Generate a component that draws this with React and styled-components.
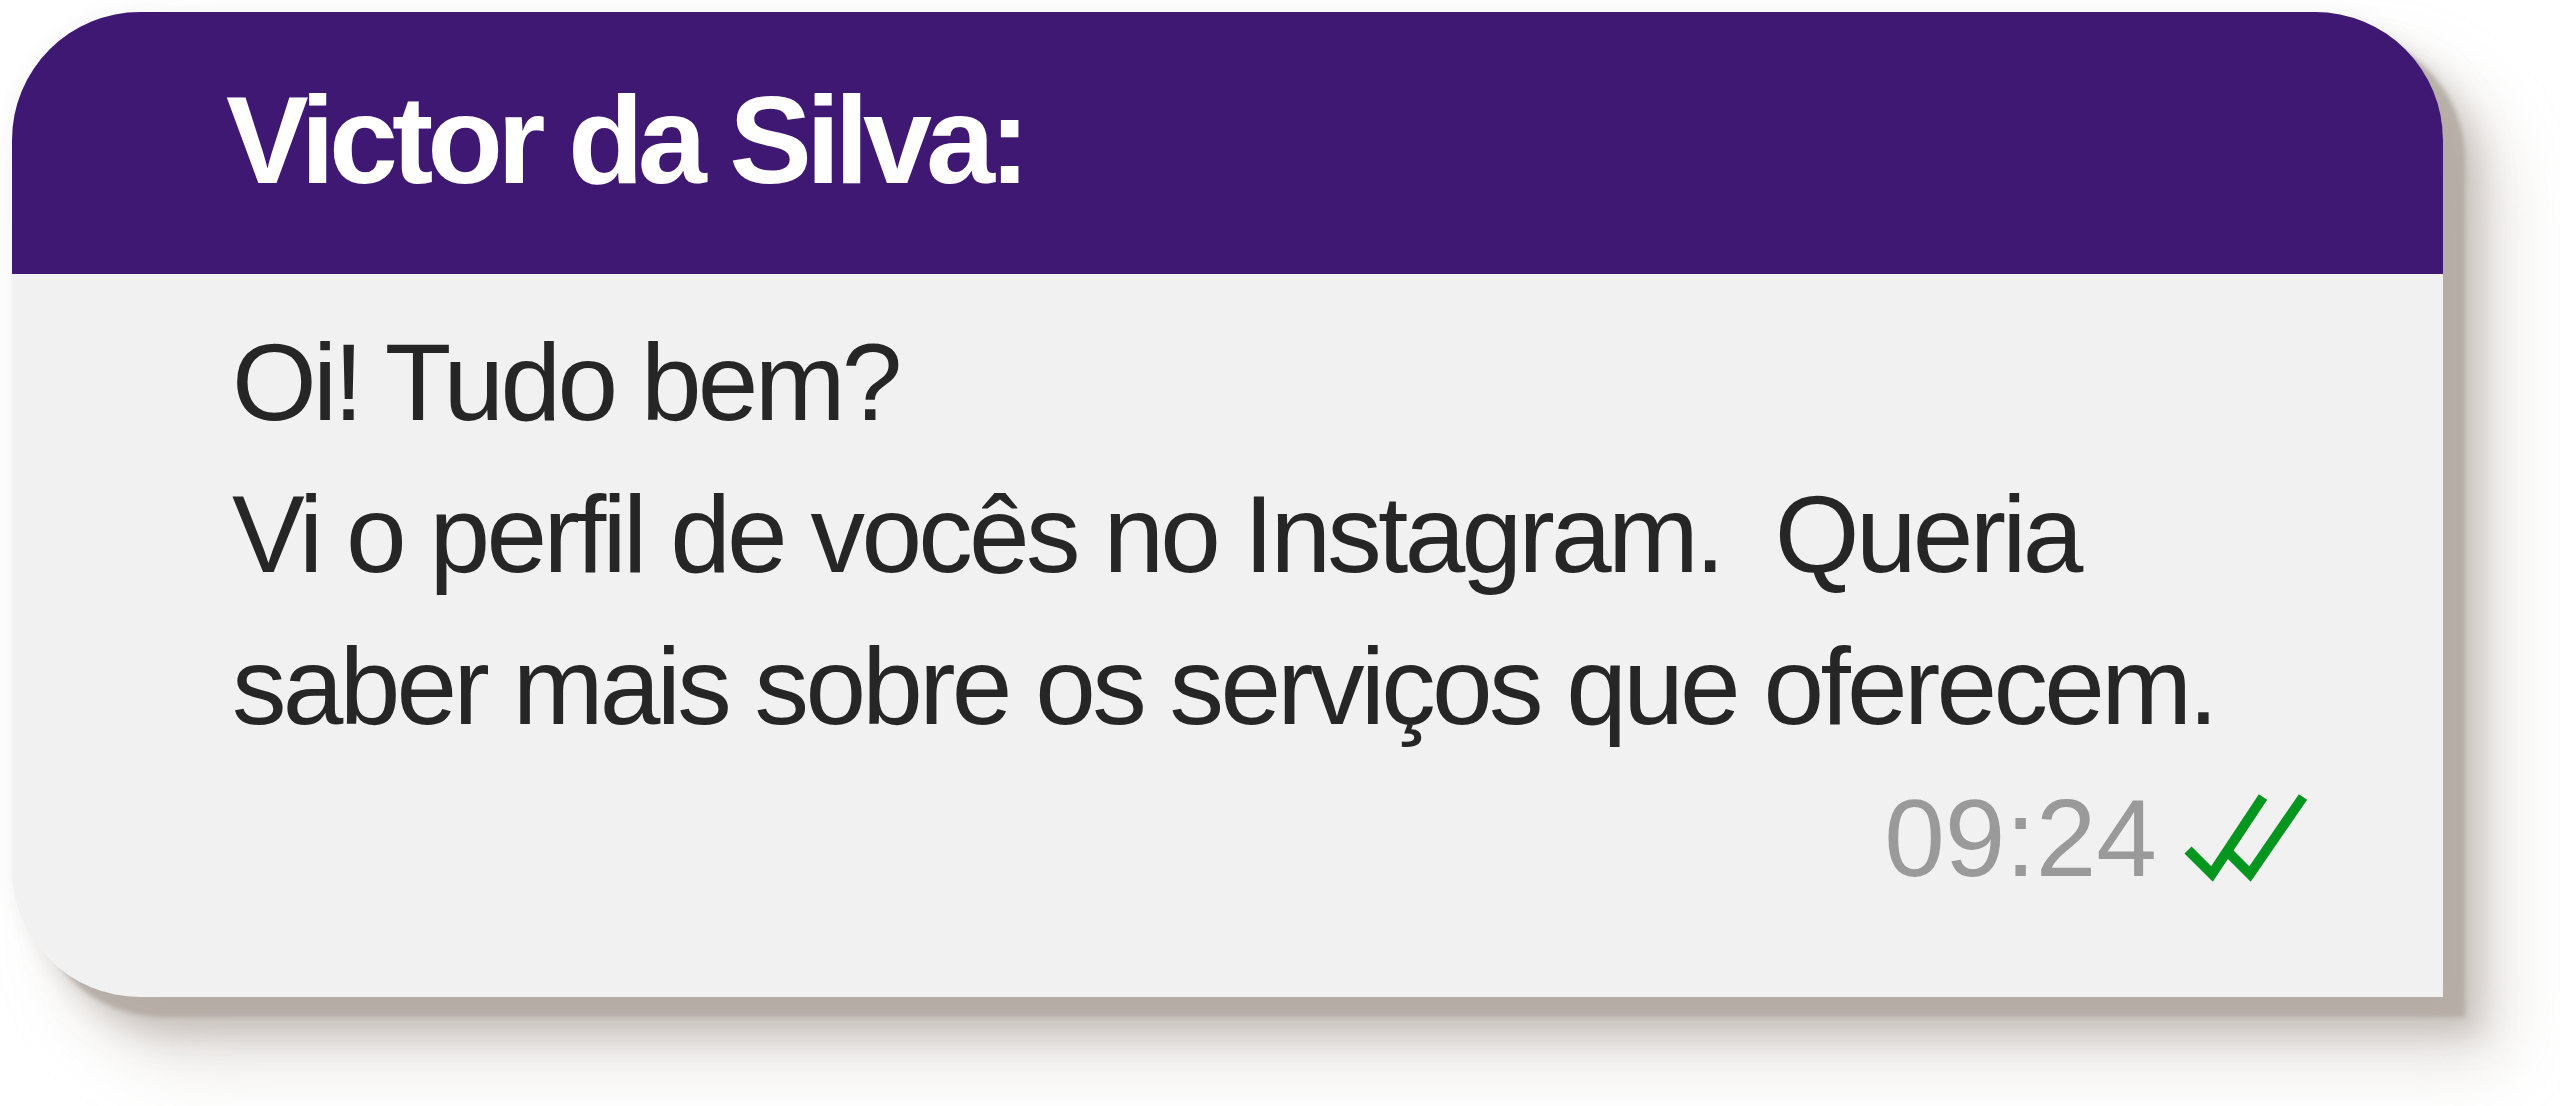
import React from "react";
import styled, { createGlobalStyle } from "styled-components";

const GlobalStyle = createGlobalStyle`
    html, body {
        margin: 0;
        padding: 0;
        background: #ffffff;
    }
    body {
        font-family: "Liberation Sans", Arial, Helvetica, sans-serif;
    }
`;

const Page = styled.div`
    width: 2560px;
    height: 1106px;
    padding: 12px 0 0 12px;
    box-sizing: border-box;
    overflow: hidden;
`;

const Bubble = styled.div`
    width: 2431px;
    height: 985px;
    display: flex;
    flex-direction: column;
    background: #f1f1f1;
    border-radius: 128px 128px 0 128px;
    overflow: hidden;
    box-shadow:
        22px 20px 4px rgba(176, 168, 160, 0.8),
        38px 38px 30px rgba(176, 168, 160, 0.55),
        56px 60px 70px rgba(184, 176, 168, 0.4),
        0 0 24px rgba(0, 0, 0, 0.05);
`;

const Header = styled.div`
    height: 262px;
    flex: none;
    box-sizing: border-box;
    padding: 66px 0 0 214px;
    background: #3f1873;
`;

const Sender = styled.h1`
    margin: 0;
    font-size: 124px;
    line-height: 1;
    font-weight: 700;
    letter-spacing: -0.048em;
    color: #ffffff;
`;

const Body = styled.div`
    flex: 1;
    padding: 32px 133px 0 220px;
    color: #262626;
    font-size: 109px;
    line-height: 152px;
`;

const Line = styled.p`
    margin: 0;
    letter-spacing: -0.034em;
    white-space: pre;
`;

const Meta = styled.div`
    display: flex;
    justify-content: flex-end;
    align-items: center;
    gap: 23px;
`;

const Time = styled.span`
    color: #9a9a9a;
`;

function DoubleCheck() {
    return (
        <svg width="130" height="100" viewBox="0 0 130 100" fill="none">
            <polyline points="8,62 32,86 83,9" stroke="#05961f" strokeWidth="10" strokeLinejoin="miter" />
            <polyline points="47,63 70,86 123,9" stroke="#05961f" strokeWidth="10" strokeLinejoin="miter" />
        </svg>
    );
}

function App() {
    return (
        <>
            <GlobalStyle />
            <Page>
                <Bubble>
                    <Header>
                        <Sender>Victor da Silva:</Sender>
                    </Header>
                    <Body>
                        <Line>Oi! Tudo bem?</Line>
                        <Line>{"Vi o perfil de vocês no Instagram.  Queria"}</Line>
                        <Line>saber mais sobre os serviços que oferecem.</Line>
                        <Meta>
                            <Time>09:24</Time>
                            <DoubleCheck />
                        </Meta>
                    </Body>
                </Bubble>
            </Page>
        </>
    );
}

export default App;
